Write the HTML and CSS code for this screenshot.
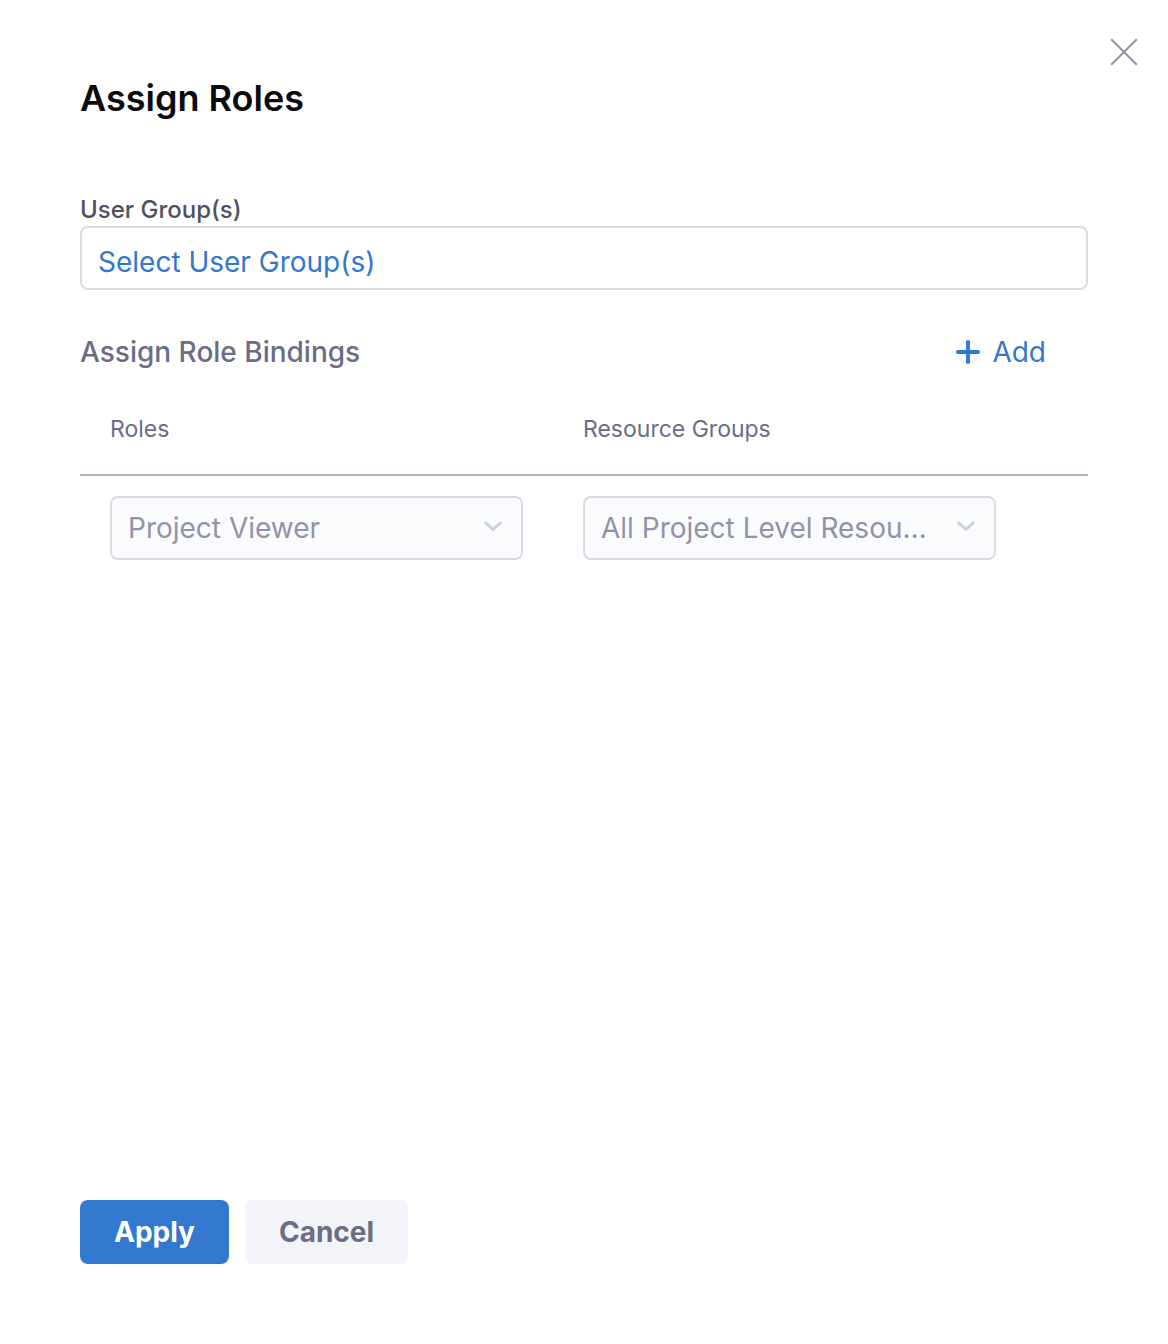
FILE: index.html
```html
<!DOCTYPE html>
<html lang="en">
<head>
<meta charset="utf-8">
<meta name="viewport" content="width=device-width, initial-scale=1">
<title>Assign Roles</title>
<link rel="stylesheet" href="styles.css">
</head>
<body>
<main class="dialog">
  <button class="close" type="button" aria-label="Close">
    <svg viewBox="0 0 28 28" width="28" height="28" aria-hidden="true"><path d="M1.2 1.2 26.8 26.8M26.8 1.2 1.2 26.8"/></svg>
  </button>
  <h1 class="title">Assign Roles</h1>
  <form class="form">
    <label class="field-label" for="user-groups">User Group(s)</label>
    <button class="picker" id="user-groups" type="button">Select User Group(s)</button>
    <div class="section-head">
      <h2 class="section-title">Assign Role Bindings</h2>
      <button class="add" type="button">
        <svg viewBox="0 0 24 24" width="24" height="24" aria-hidden="true"><path d="M12 2v20M2 12h20"/></svg>
        Add
      </button>
    </div>
    <table class="bindings">
      <colgroup><col><col><col class="action-col"></colgroup>
      <thead>
        <tr>
          <th scope="col" id="roles-head">Roles</th>
          <th scope="col" id="groups-head">Resource Groups</th>
          <td></td>
        </tr>
      </thead>
      <tbody>
        <tr>
          <td>
            <div class="select-wrap">
              <select class="select" aria-labelledby="roles-head" disabled><option>Project Viewer</option></select>
              <svg class="chevron" viewBox="0 0 20 12" width="20" height="12" aria-hidden="true"><path d="M2.7 2.8 10 9.3 17.3 2.8"/></svg>
            </div>
          </td>
          <td>
            <div class="select-wrap">
              <select class="select" aria-labelledby="groups-head" disabled><option>All Project Level Resources</option></select>
              <svg class="chevron" viewBox="0 0 20 12" width="20" height="12" aria-hidden="true"><path d="M2.7 2.8 10 9.3 17.3 2.8"/></svg>
            </div>
          </td>
          <td></td>
        </tr>
      </tbody>
    </table>
    <div class="actions">
      <button class="button primary" type="submit">Apply</button>
      <button class="button" type="button">Cancel</button>
    </div>
  </form>
</main>
</body>
</html>
```
FILE: styles.css
```css
* {
  box-sizing: border-box;
}

body {
  margin: 0;
  background: #fff;
  color: #6b6d85;
  font-family: Inter, "Liberation Sans", sans-serif;
  font-size: 28px;
  line-height: 32px;
}

button,
select {
  margin: 0;
  font: inherit;
}

button {
  border: 0;
  background: none;
  cursor: pointer;
}

svg {
  display: block;
  fill: none;
  stroke: currentColor;
}

.dialog {
  position: relative;
  display: flex;
  flex-direction: column;
  min-height: 100vh;
  padding: 76px 80px 80px;
}

.close {
  position: absolute;
  top: 38px;
  right: 30px;
  padding: 0;
  color: #9293ab;
  stroke-width: 2;
}

.title {
  margin: 0 0 74px;
  color: #0b0b0d;
  font-size: 36px;
  font-weight: 600;
  line-height: 44px;
}

.form {
  display: flex;
  flex: 1;
  flex-direction: column;
}

.field-label {
  color: #4f5162;
  font-size: 24px;
  font-weight: 500;
}

.picker {
  height: 64px;
  padding: 8px 16px 0;
  border: 2px solid #d9dae5;
  border-radius: 8px;
  color: #3278ce;
  text-align: left;
}

.section-head {
  display: flex;
  align-items: center;
  justify-content: space-between;
  margin-top: 46px;
  padding-right: 42px;
}

.section-title {
  margin: 0;
  font-size: 28px;
  font-weight: 500;
}

.add {
  display: flex;
  align-items: center;
  gap: 12px;
  padding: 0;
  color: #3278ce;
}

.add svg {
  stroke-width: 4;
  stroke-linecap: round;
}

.bindings {
  width: 100%;
  margin-top: 28px;
  border-collapse: collapse;
  table-layout: fixed;
}

.action-col {
  width: 62px;
}

.bindings th {
  padding: 17px 30px 29px;
  font-size: 23px;
  font-weight: 400;
  text-align: left;
}

.bindings thead tr {
  border-bottom: 2px solid #b0b1c4;
}

.bindings tbody td {
  padding: 20px 30px;
}

.bindings tr > :last-child {
  padding: 0;
}

.select-wrap {
  display: grid;
  align-items: center;
}

.select-wrap > * {
  grid-area: 1 / 1;
}

.select {
  appearance: none;
  width: 100%;
  height: 64px;
  padding: 0 64px 0 16px;
  border: 2px solid #d9dae5;
  border-radius: 8px;
  background: #fafbfc;
  color: #9293ab;
  opacity: 1;
  overflow: hidden;
  text-overflow: ellipsis;
  white-space: nowrap;
}

.chevron {
  justify-self: end;
  margin: 0 20px 4px 0;
  color: #ccd1d9;
  stroke-width: 3;
  stroke-linecap: round;
  stroke-linejoin: round;
  pointer-events: none;
}

.actions {
  display: flex;
  gap: 16px;
  margin-top: auto;
}

.button {
  height: 64px;
  padding: 0 34px;
  border-radius: 8px;
  background: #f3f3fa;
  color: #6b6d85;
  font-weight: 700;
}

.primary {
  background: #3278ce;
  color: #fff;
}
```
